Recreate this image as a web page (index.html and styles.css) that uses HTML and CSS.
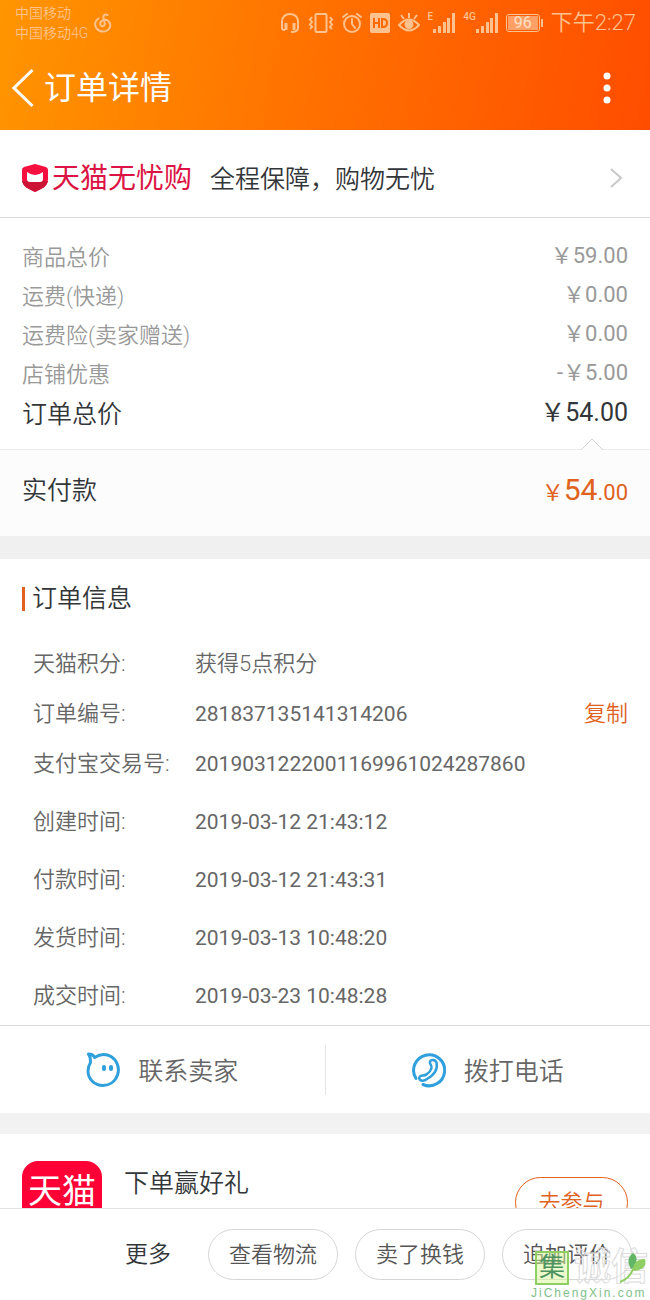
FILE: index.html
```html
<!DOCTYPE html>
<html lang="zh-CN">
<head>
<meta charset="utf-8">
<meta name="viewport" content="width=device-width, initial-scale=1">
<title>订单详情</title>
<link rel="stylesheet" href="styles.css">
</head>
<body>
<header class="top">
  <div class="status">
    <div class="carriers"><span>中国移动</span><span>中国移动4G</span></div>
    <svg class="music" width="18" height="20" viewBox="0 0 18 20" fill="none" stroke="currentColor" stroke-width="2" stroke-linecap="round"><path d="M13.500 2C11 .8 9 2 9.400 4.500L10.800 10.500C11 14 6.500 14 6.300 11C6 6.500 12.500 5.500 14.800 8.500C18.500 13 14.500 18.500 9 18.500C3.500 18.500 .5 14 1.200 10C1.600 8 2.800 6.500 4.500 5.500"/></svg>
    <div class="indicators">
      <svg width="20" height="22" viewBox="0 0 20 22" fill="none" stroke="currentColor" stroke-width="2"><path d="M2 15V9.500C2 5 5.500 2 10 2S18 5 18 9.500V16C18 19 16 20 11 20"/><path d="M6 11v7M14 11v7" stroke-width="3"/><path d="M2 11v5q0 2 3 2"/></svg>
      <svg width="26" height="22" viewBox="0 0 26 22" fill="none" stroke="currentColor" stroke-width="2"><rect x="7.500" y="2" width="11" height="18" rx="1"/><path d="M4 5L2 7.500L4 10L2 12.500L4 15L2 17M22 5L24 7.500L22 10L24 12.500L22 15L24 17"/></svg>
      <svg width="20" height="22" viewBox="0 0 20 22" fill="none" stroke="currentColor" stroke-width="2" stroke-linecap="round"><circle cx="10" cy="12" r="8"/><path d="M10 7v5l3 4M1 5l4-3M19 5l-4-3"/></svg>
      <svg width="20" height="22" viewBox="0 0 20 22"><rect y="1" width="20" height="20" rx="2" fill="currentColor"/><path d="M4 6v10M9 6v10M4 11h5M12 7v8h1q4 0 4-4t-4-4z" fill="none" stroke="#ff6a00" stroke-width="2"/></svg>
      <svg width="22" height="22" viewBox="0 0 22 22" fill="none" stroke="currentColor" stroke-width="2"><path d="M1 13Q11 2 21 13Q11 24 1 13z"/><circle cx="11" cy="12.500" r="3.500" fill="currentColor"/><path d="M11 1v5M3 3l3 4M19 3l-3 4"/></svg>
      <span class="signal"><small>E</small><svg width="22" height="20" viewBox="0 0 22 20" fill="currentColor"><path d="M0 16h3v4H0zM5 13h3v7H5zM10 9h3v11h-3zM14 5h3v15h-3zM19 0h3v20h-3z"/></svg></span>
      <span class="signal"><small>4G</small><svg width="22" height="20" viewBox="0 0 22 20" fill="currentColor"><path d="M0 16h3v4H0zM5 13h3v7H5zM10 9h3v11h-3zM14 5h3v15h-3zM19 0h3v20h-3z"/></svg></span>
      <span class="battery"><span>96</span></span>
      <time>下午2:27</time>
    </div>
  </div>
  <div class="nav">
    <button class="back" type="button" aria-label="返回"><svg width="22" height="40" viewBox="0 0 22 40" fill="none" stroke="currentColor" stroke-width="3"><path d="M20.500 2L2 20L20.500 38"/></svg></button>
    <h1>订单详情</h1>
    <button class="menu" type="button" aria-label="菜单"><svg width="8" height="34" viewBox="0 0 8 34" fill="currentColor"><circle cx="4" cy="5" r="3.500"/><circle cx="4" cy="17" r="3.500"/><circle cx="4" cy="29" r="3.500"/></svg></button>
  </div>
</header>

<main>
  <a class="guarantee" href="#guarantee">
    <svg width="26" height="28" viewBox="0 0 26 28"><path d="M13 0L24 3Q26 4 26 6V15Q26 22 19 25L13 28L7 25Q0 22 0 15V6Q0 4 2 3z" fill="#f5103f"/><path d="M0 17H26Q25 22 19 25L13 28L7 25Q1 22 0 17z" fill="#cc1435"/><path d="M5 8Q9 11 13 11T21 8V15Q21 18 18 18H8Q5 18 5 15z" fill="#fff"/></svg>
    <strong>天猫无忧购</strong>
    <span>全程保障，购物无忧</span>
    <svg class="chevron" width="14" height="22" viewBox="0 0 14 22" fill="none" stroke="#c8c8c8" stroke-width="2"><path d="M2 2L12 11L2 20"/></svg>
  </a>

  <section class="prices">
    <dl>
      <div><dt>商品总价</dt><dd>￥59.00</dd></div>
      <div><dt>运费(快递)</dt><dd>￥0.00</dd></div>
      <div><dt>运费险(卖家赠送)</dt><dd>￥0.00</dd></div>
      <div><dt>店铺优惠</dt><dd>-￥5.00</dd></div>
      <div class="total"><dt>订单总价</dt><dd>￥54.00</dd></div>
    </dl>
  </section>
  <section class="paid">
    <svg class="caret" width="24" height="13" viewBox="0 0 24 13"><path d="M1 12L12 1L23 12" fill="#fcfcfc" stroke="#d4d4d4"/></svg>
    <span>实付款</span>
    <span class="amount">￥<b>54</b>.00</span>
  </section>

  <section class="info">
    <h2>订单信息</h2>
    <dl>
      <div><dt>天猫积分:</dt><dd class="cjk">获得5点积分</dd></div>
      <div><dt>订单编号:</dt><dd>281837135141314206</dd><dd class="copy"><button type="button">复制</button></dd></div>
      <div><dt>支付宝交易号:</dt><dd>2019031222001169961024287860</dd></div>
    </dl>
    <dl class="times">
      <div><dt>创建时间:</dt><dd>2019-03-12 21:43:12</dd></div>
      <div><dt>付款时间:</dt><dd>2019-03-12 21:43:31</dd></div>
      <div><dt>发货时间:</dt><dd>2019-03-13 10:48:20</dd></div>
      <div><dt>成交时间:</dt><dd>2019-03-23 10:48:28</dd></div>
    </dl>
  </section>

  <section class="contact">
    <button type="button">
      <svg width="34" height="36" viewBox="0 0 34 36" fill="none" stroke="#2fa0dc" stroke-width="3" stroke-linecap="round" stroke-linejoin="round"><path d="M4.500 9.500C4.500 6.500 4 4 2.500 2C5 2 7.500 3 8.500 5.500C14 2 20 1.500 25 4.500C31 8 34 16 31.500 23C29 30 23 33.500 17 33.500C8.500 33.500 2 27 2 19C2 16 3 13 4.500 10.500"/><path d="M18 15v2M25 15v2" stroke-width="4"/></svg>
      <span>联系卖家</span>
    </button>
    <button type="button">
      <svg width="34" height="36" viewBox="0 0 34 36" fill="none" stroke="#2fa0dc" stroke-width="3" stroke-linecap="round" stroke-linejoin="round"><path d="M4 26.500A15.500 15.500 0 1 1 11 32.500"/><path d="M18 11C17 7.500 23 6.500 24.500 10.500C26 17 22 23 15 27C11 30 6 28.500 7.500 25C9 22 12 25 15 22C18 20 19 18 19.500 16C20 14 18.500 13 18 11z" stroke-width="2.500"/></svg>
      <span>拨打电话</span>
    </button>
  </section>

  <section class="promo">
    <div class="tmall">天猫</div>
    <h3>下单赢好礼</h3>
    <button type="button">去参与</button>
  </section>
</main>

<footer class="actions">
  <button class="more" type="button">更多</button>
  <button type="button">查看物流</button>
  <button type="button">卖了换钱</button>
  <button type="button">追加评价</button>
  <div class="watermark">
    <div class="mark"><span class="seal">集</span><span class="hollow">诚信</span></div>
    <span class="site">JiChengXin.com</span>
    <svg class="leaf" width="30" height="32" viewBox="0 0 30 32"><path d="M13 17Q7 7 15 1Q21 4 17 15z" fill="#62b565"/><path d="M14 18Q17 6 27 7Q30 17 16 19z" fill="#8fce62"/><path d="M15 17Q12 26 2 30" fill="none" stroke="#8fce62" stroke-width="2"/></svg>
  </div>
</footer>
</body>
</html>
```
FILE: styles.css
```css
* { box-sizing: border-box; }

body {
  margin: 0;
  height: 100vh;
  display: flex;
  flex-direction: column;
  background: #fff;
  color: #333639;
  font-family: Roboto, "Noto Sans CJK SC", sans-serif;
  font-size: 22px;
  font-weight: 350;
  line-height: 30px;
}

button {
  padding: 0;
  border: 0;
  background: none;
  color: inherit;
  font: inherit;
  cursor: pointer;
}

h1, h2, h3, dl, dd { margin: 0; font-weight: inherit; }
svg { display: block; flex: none; }

/* Header */
.top {
  flex: none;
  background: linear-gradient(100deg, #ff9500 0%, #ff7300 45%, #ff4d00 100%);
  color: #fff;
}

.status {
  display: flex;
  align-items: center;
  height: 45px;
  padding: 0 14px 0 15px;
  color: #ffc28e;
}

.carriers {
  display: flex;
  flex-direction: column;
  font-size: 14px;
  line-height: 20px;
}

.music { margin-left: 6px; }

.indicators {
  display: flex;
  align-items: center;
  gap: 8px;
  margin-left: auto;
}

.signal { display: flex; align-items: flex-end; }
.signal small {
  align-self: flex-start;
  font-size: 10px;
  font-weight: 500;
  line-height: 8px;
}

.battery {
  position: relative;
  width: 34px;
  height: 18px;
  margin-right: 3px;
  padding: 1px;
  border: 1px solid currentColor;
  border-radius: 3px;
}
.battery span {
  display: block;
  background: #ffa066;
  color: #ffe0c8;
  font-size: 16px;
  font-weight: 400;
  line-height: 14px;
  text-align: center;
}
.battery::after {
  content: "";
  position: absolute;
  top: 4px;
  right: -4px;
  width: 2px;
  height: 8px;
  background: currentColor;
}

time { font-size: 22px; }

.nav {
  display: flex;
  align-items: center;
  height: 85px;
  padding: 0 39px 0 12px;
}
.nav h1 {
  flex: 1;
  margin-left: 10px;
  font-size: 32px;
  font-weight: 400;
  line-height: 40px;
}

/* Guarantee link */
.guarantee {
  display: flex;
  align-items: center;
  height: 88px;
  padding: 8px 27px 0 22px;
  border-bottom: 1px solid #d9d9d9;
  color: inherit;
  font-size: 25px;
  text-decoration: none;
}
.guarantee span { padding-top: 4px; }
.guarantee strong {
  margin: 0 18px 0 4px;
  padding-top: 2px;
  color: #dc1443;
  font-size: 28px;
  font-weight: 400;
}
.chevron { margin-left: auto; }

/* Scrolling content */
main {
  flex: 1;
  min-height: 0;
  overflow-y: auto;
  scrollbar-width: none;
}

.prices { padding: 20px 22px 17px; }
.prices dl > div {
  display: flex;
  justify-content: space-between;
  align-items: center;
  height: 39px;
  color: #999;
}
.prices dd { padding-bottom: 4px; font-weight: 400; }
.prices .total { height: 38px; color: #333639; font-size: 25px; }
.total dt { padding-top: 4px; }
.total dd { padding-bottom: 0; }

.paid {
  position: relative;
  display: flex;
  justify-content: space-between;
  align-items: center;
  height: 87px;
  padding: 0 22px 4px;
  border-top: 1px solid #ececec;
  background: #fcfcfc;
  font-size: 25px;
}
.caret { position: absolute; top: -12px; right: 46px; }
.amount { color: #e0621e; font-size: 22px; font-weight: 400; }
.amount b { font-size: 30px; font-weight: 400; }

/* Order information */
.info {
  padding: 20px 22px 0;
  border-top: 23px solid #f0f0f0;
  color: #666;
}
.info h2 {
  display: flex;
  align-items: center;
  gap: 7px;
  height: 40px;
  margin-bottom: 20px;
  color: #333639;
  font-size: 25px;
}
.info h2::before {
  content: "";
  width: 3px;
  height: 24px;
  background: #e0621e;
}
.info dl > div {
  display: grid;
  grid-template-columns: 162px 1fr auto;
  align-items: center;
  height: 50px;
  padding-left: 11px;
}
.info dd { font-size: 21px; font-weight: 400; }
.info .cjk, .info .copy { font-size: 22px; font-weight: 350; }
.info .copy { color: #e0621e; }
.info .times { padding-top: 4px; }
.info .times > div { height: 58px; }

/* Contact buttons */
.contact {
  display: flex;
  align-items: center;
  height: 88px;
  border-top: 1px solid #d9d9d9;
  color: #666;
  font-size: 25px;
}
.contact button {
  flex: 1;
  display: flex;
  justify-content: center;
  align-items: center;
  gap: 18px;
  height: 50px;
}
.contact span { padding-top: 4px; }
.contact button + button { border-left: 1px solid #e6e6e6; }

/* Promotion */
.promo {
  display: flex;
  align-items: flex-start;
  padding: 27px 22px;
  border-top: 21px solid #f2f2f2;
}
.tmall {
  width: 80px;
  height: 80px;
  padding-top: 10px;
  border-radius: 16px;
  background: #ff0036;
  color: #fff;
  font-size: 34px;
  font-weight: 400;
  line-height: 40px;
  text-align: center;
}
.promo h3 { margin-left: 22px; padding-top: 8px; font-size: 25px; }
.promo button {
  width: 113px;
  height: 51px;
  margin: 16px 0 0 auto;
  border: 1px solid #e0621e;
  border-radius: 26px;
  color: #e0621e;
}

/* Bottom action bar */
.actions {
  position: relative;
  flex: none;
  display: flex;
  justify-content: flex-end;
  align-items: center;
  gap: 17px;
  height: 92px;
  padding: 0 18px;
  border-top: 1px solid #e2e2e2;
  background: #fff;
  color: #555;
}
.actions button {
  width: 130px;
  height: 51px;
  border: 1px solid #d6d6d6;
  border-radius: 26px;
}
.actions .more {
  width: auto;
  margin-right: 20px;
  border: 0;
  color: #333639;
  font-size: 23px;
}

/* Site watermark laid over the bar */
.watermark {
  position: absolute;
  right: 0;
  bottom: 0;
  width: 119px;
  pointer-events: none;
}
.mark { display: flex; align-items: center; gap: 5px; padding-left: 4px; }
.seal {
  flex: none;
  width: 34px;
  height: 34px;
  border: 2px solid #8fce62;
  background: rgba(214, 245, 150, 0.5);
  color: #4f9460;
  font-size: 26px;
  font-weight: 400;
  line-height: 28px;
  text-align: center;
}
.hollow {
  color: rgba(255, 255, 255, 0.3);
  font-size: 37px;
  font-weight: 700;
  line-height: 36px;
  -webkit-text-stroke: 1px #dcdcdc;
}
.site {
  display: block;
  color: #7fbf8a;
  font-family: "Liberation Sans", sans-serif;
  font-size: 12px;
  font-weight: 400;
  line-height: 14px;
  letter-spacing: 2px;
  white-space: nowrap;
}
.leaf { position: absolute; top: 2px; right: 2px; }
```
